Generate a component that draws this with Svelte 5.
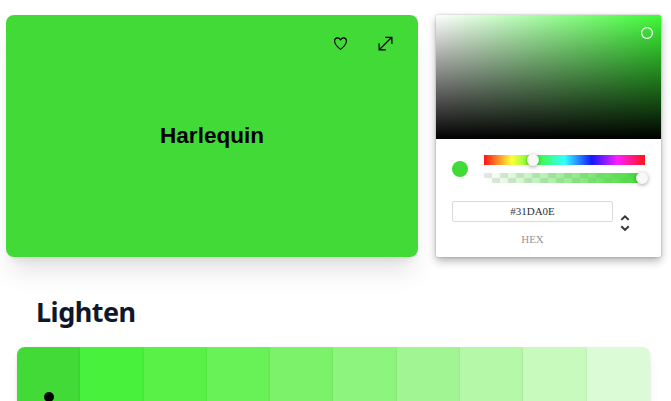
<script>
  const swatches = ['#41da36', '#48f23c', '#59f148', '#69f257', '#7cf26b', '#8df57e', '#a1f693', '#b4f8a8', '#c8fabe', '#dbfbd6'];
  let hex = $state('#31DA0E');
</script>

<main>
  <div class="top">
    <section class="card">
      <div class="actions">
        <svg width="16" height="16" viewBox="0 0 16 16" fill="none" stroke="#000" stroke-width="1.1" stroke-linejoin="round" aria-label="Like">
          <path d="M8.5 13.4C6.9 12.1 2.6 9 2.6 5C2.6 3.1 3.7 1.9 5.4 1.9C6.8 1.9 7.9 2.7 8.5 4C9.1 2.7 10.2 1.9 11.6 1.9C13.3 1.9 14.4 3.1 14.4 5C14.4 9 10.1 12.1 8.5 13.4Z" />
        </svg>
        <svg width="16" height="16" viewBox="0 0 16 16" fill="none" stroke="#000" stroke-width="1.2" aria-label="Expand">
          <path d="M2.5 13.5L14.5 1.5M8.2 1.4H14.9V8M2.1 7.2V13.9H8.8" />
        </svg>
      </div>
      <h1>Harlequin</h1>
    </section>

    <section class="picker">
      <div class="saturation"><span class="ring"></span></div>
      <div class="body">
        <div class="controls">
          <span class="dot"></span>
          <div class="sliders">
            <div class="bar hue"><span class="knob" style="left: 30.4%"></span></div>
            <div class="bar alpha"><span class="knob" style="left: 98.1%"></span></div>
          </div>
        </div>
        <div class="fields">
          <label>
            <input bind:value={hex} spellcheck="false" />
            <span>HEX</span>
          </label>
          <svg class="toggle" width="12" height="20" viewBox="0 0 12 20" fill="none" stroke="#333" stroke-width="2">
            <path d="M2.3 6.9L6 3.3L9.7 6.9M2.3 13.3L6 16.9L9.7 13.3" />
          </svg>
        </div>
      </div>
    </section>
  </div>

  <h2>Lighten</h2>
  <div class="swatches">
    {#each swatches as color, i}
      <div class="swatch" style="background: {color}">
        {#if i === 0}<span class="mark"></span>{/if}
      </div>
    {/each}
  </div>
</main>

<style>
  :global(body) { background: #fff; overflow: hidden; }
  main { width: 671px; height: 401px; box-sizing: border-box; padding-top: 15px; overflow: hidden; }
  .top { display: flex; gap: 18px; padding-left: 6px; }
  .card {
    width: 412px; height: 242px; border-radius: 8px; background: #41da36;
    box-shadow: 0 20px 25px -5px rgba(0, 0, 0, 0.1), 0 8px 10px -6px rgba(0, 0, 0, 0.1);
  }
  .actions { display: flex; justify-content: flex-end; gap: 29px; padding: 21px 25px 0 0; }
  .actions svg { display: block; }
  h1 { margin: 70px 0 0; text-align: center; font: 700 22.5px/28px "Liberation Sans", Arial, sans-serif; color: #000; }
  .picker {
    width: 225px; height: 242px; border-radius: 2px; background: #fff; position: relative;
    box-shadow: 0 0 2px rgba(0, 0, 0, 0.3), 0 4px 8px rgba(0, 0, 0, 0.3);
  }
  .saturation {
    height: 124px; position: relative; border-radius: 2px 2px 0 0;
    background: linear-gradient(to top, #000, transparent), linear-gradient(to right, #fff, transparent), #3dfb35;
  }
  .ring {
    position: absolute; left: 205px; top: 12px; width: 12px; height: 12px; box-sizing: border-box;
    border-radius: 50%; box-shadow: inset 0 0 0 1.2px #fff;
  }
  .body { padding: 16px 16px 0; }
  .controls { display: flex; align-items: center; }
  .dot { width: 16px; height: 16px; border-radius: 50%; background: #41da36; margin-right: 16px; }
  .sliders { flex: 1; display: flex; flex-direction: column; gap: 8px; }
  .bar { height: 10px; position: relative; }
  .hue { background: linear-gradient(to right, #ff1414, #ffff3a 17%, #3dfb35 33%, #34ffff 50%, #1616ff 67%, #ff1eff 83%, #ff1414); }
  .alpha {
    background:
      linear-gradient(to right, rgba(65, 218, 54, 0), #41da36),
      repeating-conic-gradient(#fff 0 25%, #e6e6e6 0 50%) 0 0 / 16px 10px;
  }
  .knob {
    position: absolute; top: -1px; width: 12px; height: 12px; border-radius: 50%;
    transform: translateX(-6px); background: #f8f8f8; box-shadow: 0 1px 4px rgba(0, 0, 0, 0.37);
  }
  .fields { display: flex; padding-top: 18px; }
  label { width: 161px; }
  input {
    display: block; width: 161px; height: 21px; box-sizing: border-box; padding: 0 0 2px; border: 1px solid #dadada;
    border-radius: 2px; background: #fff; text-align: center; color: #333; outline: none;
    font: 11px "Liberation Serif", "Times New Roman", serif;
  }
  label span {
    display: block; margin-top: 12px; text-align: center; color: #969696;
    font: 11px/11px "Liberation Serif", "Times New Roman", serif;
  }
  .toggle { margin: 12px 0 0 6px; }
  h2 { margin: 35px 0 0 36px; font: 700 27px/40px "Noto Sans", "Open Sans", sans-serif; letter-spacing: -0.5px; color: #0f172a; }
  .swatches {
    display: flex; width: 633px; height: 96px; margin: 15px 0 0 17px; border-radius: 8px;
    box-shadow: 0 10px 15px -3px rgba(0, 0, 0, 0.08);
  }
  .swatch {
    flex: 1; display: flex; justify-content: center;
    box-shadow: 0 1px 3px rgba(0, 0, 0, 0.1), 0 1px 2px -1px rgba(0, 0, 0, 0.1);
  }
  .swatch:first-child { border-radius: 8px 0 0 8px; }
  .swatch:last-child { border-radius: 0 8px 8px 0; }
  .mark { width: 10px; height: 10px; margin-top: 45px; border-radius: 50%; background: #000; }
</style>
